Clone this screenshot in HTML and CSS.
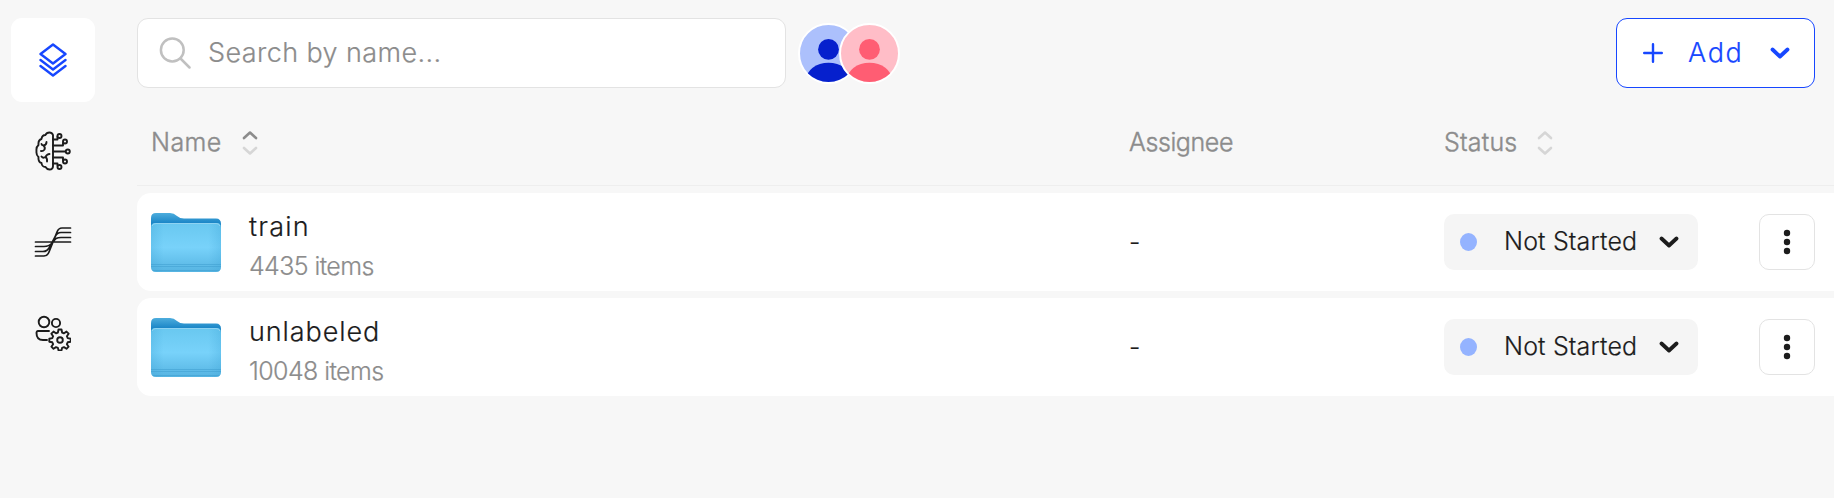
FILE: index.html
```html
<!DOCTYPE html>
<html lang="en">
<head>
<meta charset="utf-8">
<title>Datasets</title>
<link rel="stylesheet" href="styles.css">
</head>
<body>
<svg class="defs" width="0" height="0">
  <defs>
    <linearGradient id="back" x1="0" y1="0" x2="0" y2="1"><stop offset="0" stop-color="#4daddd"/><stop offset=".5" stop-color="#1b86c7"/></linearGradient>
    <linearGradient id="front" x1="0" y1="0" x2="0" y2="1"><stop offset="0" stop-color="#69c8f0"/><stop offset=".5" stop-color="#78d2fa"/><stop offset="1" stop-color="#56b4e2"/></linearGradient>
    <linearGradient id="side" x1="0" y1="0" x2="1" y2="0"><stop offset="0" stop-color="#3fa5d8" stop-opacity=".3"/><stop offset=".18" stop-color="#3fa5d8" stop-opacity="0"/><stop offset=".82" stop-color="#3fa5d8" stop-opacity="0"/><stop offset="1" stop-color="#3fa5d8" stop-opacity=".3"/></linearGradient>
    <symbol id="folder" viewBox="0 0 70 59">
      <path d="M0 14V5Q0 0 5 0H19Q23 0 26 3Q29 5.500 33 5.500H65Q70 5.500 70 11V20H0Z" fill="url(#back)"/>
      <path d="M0 15Q0 10 4 10H66Q70 10 70 15V54Q70 59 65 59H5Q0 59 0 54Z" fill="url(#front)"/>
      <path d="M0 15Q0 10 4 10H66Q70 10 70 15V54Q70 59 65 59H5Q0 59 0 54Z" fill="url(#side)"/>
      <path d="M1 13Q2 10.500 5 10.500H65Q68 10.500 69 13" fill="none" stroke="#8ed3f2"/>
      <path d="M0 51.500H70M0 53.500H70M2 57.500H68" stroke="#3c9bcd" stroke-opacity=".5"/>
    </symbol>
    <symbol id="chevron" viewBox="0 0 20 12"><path d="M2.500 2.500L10 9.500L17.500 2.500" fill="none" stroke="currentColor" stroke-width="3.800" stroke-linecap="round" stroke-linejoin="round"/></symbol>
    <symbol id="dots" viewBox="0 0 8 26"><g fill="currentColor"><circle cx="4" cy="4" r="3.200"/><circle cx="4" cy="13" r="3.200"/><circle cx="4" cy="22" r="3.200"/></g></symbol>
    <symbol id="sort" viewBox="0 0 16 26"><g fill="none" stroke-width="2.600" stroke-linecap="round" stroke-linejoin="round"><path class="up" d="M2 8L8 2.500L14 8"/><path class="down" d="M2 18L8 23.500L14 18"/></g></symbol>
  </defs>
</svg>
<div class="app">
  <nav class="rail">
    <a class="tile active">
      <svg width="28" height="34" viewBox="0 0 28 34" fill="none" stroke="currentColor" stroke-width="2.400" stroke-linejoin="round" stroke-linecap="round"><path d="M14 1.500L26.500 11L14 20.500L1.500 11Z"/><path d="M1.500 17L14 26.500L26.500 17M1.500 23L14 32.500L26.500 23"/></svg>
    </a>
    <a class="tile">
      <svg width="36" height="40" viewBox="0 0 36 40" fill="none" stroke="currentColor" stroke-width="1.900" stroke-linecap="round" stroke-linejoin="round">
        <path d="M18 4Q17 1.500 14.500 1.500Q11.500 1.500 10.500 4Q7 4 6.500 8Q3 9 3.500 14Q1 16 1.500 20Q1 24 3.500 26Q3 31 6.500 32Q7 36 10.500 36Q12 38.500 14.500 38.500Q18 38.500 18 35Z"/>
        <path d="M11.500 11Q11.500 14 8.500 14.500Q6.500 14 6.500 13M8.500 14.500Q10.500 16.500 9.500 18.500Q8 20.500 6 20M14.500 23Q12 23 10.500 26Q8 27.500 6.500 25.500M10.500 26Q12.500 27.500 12 30.500"/>
        <path d="M18 8.500H22.500V5.500M18 14.500H28V12M18 20.500H32M18 26.500H28V29M18 32.500H22.500V34.500"/>
        <g fill="#f7f7f7"><circle cx="24.500" cy="5" r="2"/><circle cx="30" cy="10.500" r="2"/><circle cx="32.800" cy="20.500" r="2"/><circle cx="30" cy="30.500" r="2"/><circle cx="24.500" cy="36" r="2"/></g>
      </svg>
    </a>
    <a class="tile">
      <svg width="38" height="32" viewBox="0 0 38 32" fill="none" stroke="currentColor" stroke-width="1.700" stroke-linecap="round" stroke-linejoin="round">
        <path d="M1.500 16H36.500M1.500 20.500H10Q15 20.500 18 17L22 12.500Q24 11.500 27 11.500H36.500M1.500 25.500H9Q13.500 25.500 16 20.500L21 11Q23 6.500 27 6.500H36.500M1.500 30H10Q13.500 30 15 26L23 6Q24.500 2 28 2H36.500"/>
      </svg>
    </a>
    <a class="tile">
      <svg width="36" height="36" viewBox="0 0 36 36" fill="none" stroke="currentColor" stroke-width="1.900" stroke-linecap="round" stroke-linejoin="round">
        <circle cx="9" cy="7" r="5.300"/><circle cx="21" cy="8" r="4.100"/>
        <path d="M14 16H3Q1.500 16 1.500 18Q1.500 25 8 25H12"/>
        <path d="M23.500 14.500h3l.6 3 1.900.8 2.500-1.700 2.100 2.100-1.700 2.500.8 1.900 3 .6v3l-3 .6-.8 1.900 1.700 2.500-2.100 2.100-2.500-1.700-1.900.8-.6 2.500h-3l-.6-2.500-1.900-.8-2.500 1.700-2.100-2.100 1.700-2.500-.8-1.900-3-.6v-3l3-.6.800-1.900-1.700-2.500 2.100-2.100 2.500 1.700 1.900-.8z"/><circle cx="25" cy="25" r="2.800"/>
      </svg>
    </a>
  </nav>
  <main class="main">
    <header class="toolbar">
      <label class="search">
        <svg width="32" height="32" viewBox="0 0 32 32" fill="none" stroke="#c0c0c0" stroke-width="2.500" stroke-linecap="round"><circle cx="13.300" cy="13" r="11.400"/><path d="M21.500 21.500L30.500 30.500"/></svg>
        <span class="placeholder">Search by name...</span>
      </label>
      <div class="avatars">
        <svg class="avatar blue" viewBox="0 0 56 56"><circle cx="28" cy="24" r="10.200"/><ellipse cx="28" cy="54" rx="22" ry="17"/></svg>
        <svg class="avatar pink" viewBox="0 0 56 56"><circle cx="28" cy="24" r="10.200"/><ellipse cx="28" cy="54" rx="22" ry="17"/></svg>
      </div>
      <button class="add">
        <svg width="20" height="20" viewBox="0 0 20 20" stroke="currentColor" stroke-width="2.400" stroke-linecap="round"><path d="M1.200 10H18.800M10 1.200V18.800"/></svg>
        <span class="add-label">Add</span>
        <svg width="20" height="12"><use href="#chevron"/></svg>
      </button>
    </header>
    <div class="grid head">
      <div class="cell"><span class="t-name">Name</span><svg class="sort asc" width="16" height="26"><use href="#sort"/></svg></div>
      <div class="cell t-assignee">Assignee</div>
      <div class="cell"><span class="t-status">Status</span><svg class="sort" width="16" height="26"><use href="#sort"/></svg></div>
    </div>
    <section class="rows">
      <article class="grid row">
        <div class="cell item"><svg width="70" height="59"><use href="#folder"/></svg><div class="labels"><div class="title t-train">train</div><div class="count">4435 items</div></div></div>
        <div class="cell dash">-</div>
        <div class="cell"><button class="pill"><i class="dot"></i><span class="pill-label">Not Started</span><svg width="20" height="12"><use href="#chevron"/></svg></button></div>
        <button class="more"><svg width="8" height="26"><use href="#dots"/></svg></button>
      </article>
      <article class="grid row">
        <div class="cell item"><svg width="70" height="59"><use href="#folder"/></svg><div class="labels"><div class="title">unlabeled</div><div class="count">10048 items</div></div></div>
        <div class="cell dash">-</div>
        <div class="cell"><button class="pill"><i class="dot"></i><span class="pill-label">Not Started</span><svg width="20" height="12"><use href="#chevron"/></svg></button></div>
        <button class="more"><svg width="8" height="26"><use href="#dots"/></svg></button>
      </article>
    </section>
  </main>
</div>
</body>
</html>
```
FILE: styles.css
```css
* { box-sizing: border-box; }
body { margin: 0; background: #f7f7f7; color: #1c1c1c; font-family: Inter, "Liberation Sans", sans-serif; font-weight: 300; font-size: 25px; line-height: 32px; overflow: hidden; -webkit-text-stroke: 0.2px currentColor; }
button { font: inherit; color: inherit; padding: 0; margin: 0; }
svg { display: block; flex: none; }
.defs { position: absolute; }
.app { display: flex; height: 498px; }
.rail { width: 137px; flex: none; padding: 18px 0 0 11px; display: flex; flex-direction: column; gap: 7px; }
.tile { width: 84px; height: 84px; border-radius: 11px; display: flex; align-items: center; justify-content: center; }
.tile.active { background: #fff; color: #1747ff; }
.main { flex: 1; min-width: 0; padding-top: 18px; }
.toolbar { display: flex; align-items: center; height: 70px; padding-right: 19px; }
.search { width: 649px; height: 70px; background: #fff; border: 1px solid #e3e3e3; border-radius: 11px; display: flex; align-items: center; gap: 17px; padding-left: 21px; color: #8c8c8c; font-size: 27px; }
.placeholder { letter-spacing: 0.4px; white-space: nowrap; }
.avatars { display: flex; margin-left: 12px; }
.avatar { width: 61px; height: 61px; border: 2.500px solid #fff; border-radius: 50%; }
.avatar.blue { background: #acc0fc; fill: #0620cd; }
.avatar.pink { background: #ffbdc7; fill: #ff5d73; margin-left: -20px; }
.add { margin-left: auto; width: 199px; height: 70px; background: #fff; border: 1px solid #1747ff; border-radius: 11px; color: #1747ff; display: flex; align-items: center; padding-left: 26px; font-size: 27px; }
.add-label { width: 56px; margin: 0 26px 0 25px; text-align: left; letter-spacing: 1.6px; }
.grid { display: grid; grid-template-columns: 978px 315px 315px 56px; align-items: center; padding-left: 14px; }
.cell { display: flex; align-items: center; }
.head { height: 98px; padding-top: 11px; border-bottom: 1px solid #eeeeee; color: #8c8c8c; -webkit-text-stroke: 0.4px currentColor; }
.head .cell { height: 68px; margin-top: -1px; }
.t-assignee { letter-spacing: -0.4px; }
.t-name { letter-spacing: 0.4px; }
.t-status { letter-spacing: 0.2px; }
.head .sort { margin: 2px 0 0 20px; }
.sort { stroke: #d6d6d6; }
.sort.asc { --up: #8c8c8c; }
.up { stroke: var(--up, #d6d6d6); }
.rows { display: flex; flex-direction: column; gap: 7px; padding-top: 7px; }
.row { height: 98px; background: #fff; border-radius: 14px 0 0 14px; }
.item { gap: 28px; }
.labels { padding-top: 8px; }
.title { font-size: 27px; line-height: 39px; letter-spacing: 0.9px; }
.t-train { letter-spacing: 1.2px; }
.count { color: #8c8c8c; line-height: 40px; letter-spacing: -0.6px; }
.pill { width: 254px; height: 56px; background: #f5f5f5; border: 0; border-radius: 10px; display: flex; align-items: center; padding-left: 16px; }
.dot { width: 17px; height: 18px; border-radius: 50%; background: #94b3ff; }
.pill-label { width: 133px; margin: 0 22px 2px 27px; text-align: left; white-space: nowrap; letter-spacing: 0.15px; }
.more { width: 56px; height: 56px; border: 1px solid #e3e3e3; border-radius: 10px; background: #fff; display: flex; align-items: center; justify-content: center; }
```
